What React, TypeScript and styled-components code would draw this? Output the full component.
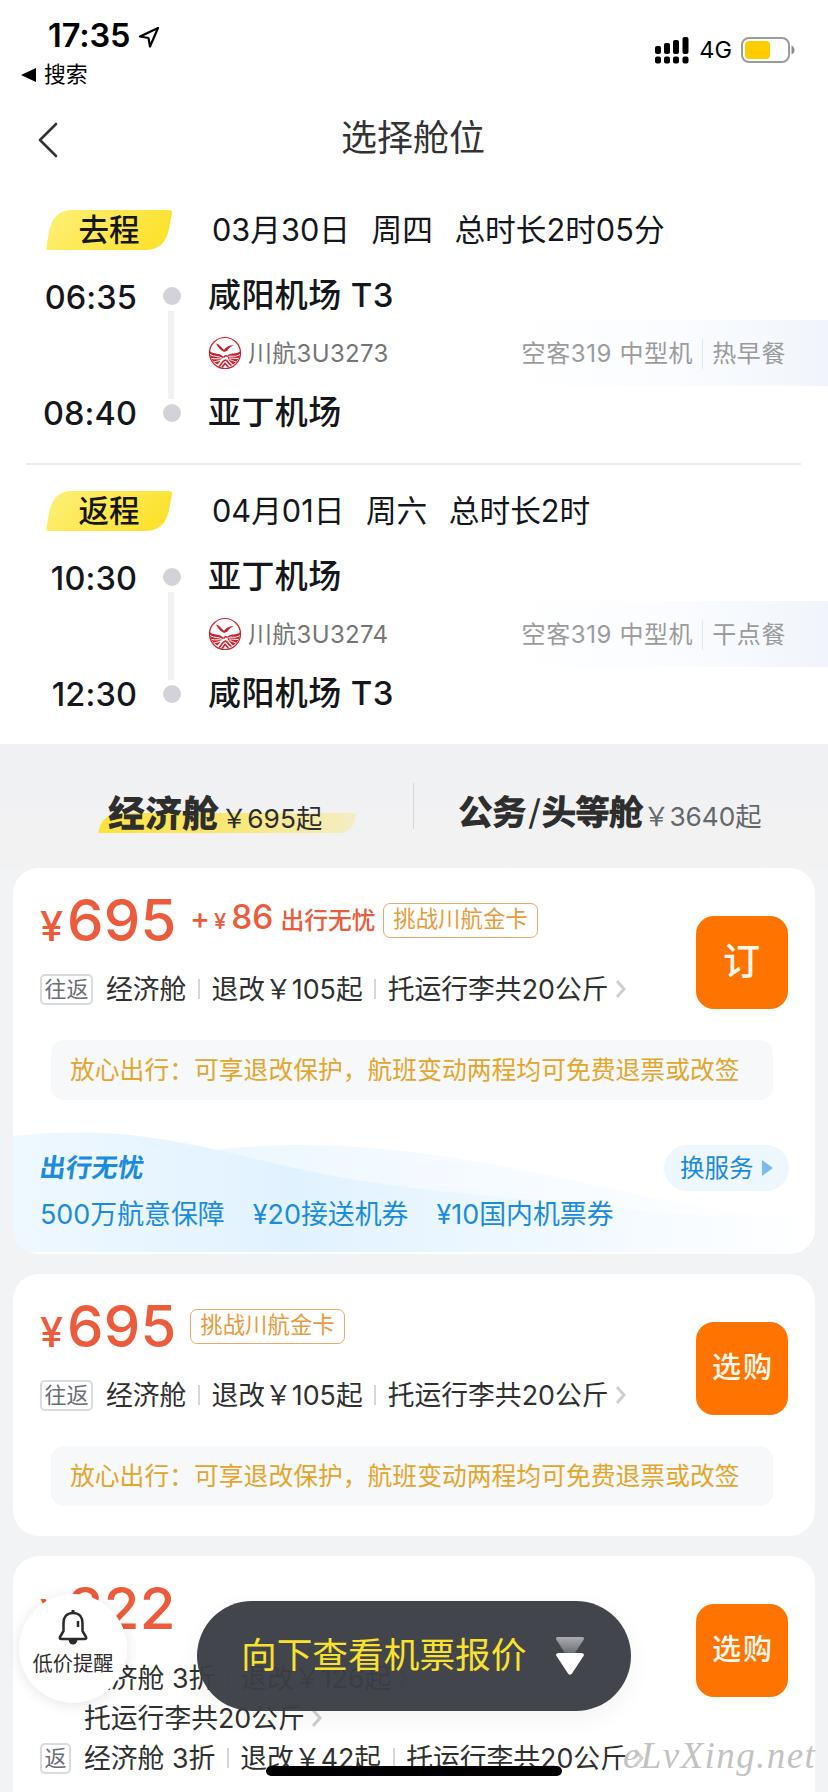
import React from "react";
import styled, { createGlobalStyle } from "styled-components";

const Global = createGlobalStyle`
  *, *::before, *::after { box-sizing: border-box; }
  html, body { margin: 0; padding: 0; }
  body {
    width: 828px; height: 1792px; overflow: hidden; background: #f1f3f5;
    font-family: Inter, "Noto Sans CJK SC", sans-serif; line-height: 1; color: #15171c;
    white-space: nowrap;
  }
  svg { display: block; flex: none; }
`;

const Screen = styled.main`
  position: relative; width: 828px; height: 1792px; overflow: hidden;
  display: flex; flex-direction: column;
`;

const Word = styled.span<{ $ls?: number; $ml?: number; $size?: number }>`
  flex: none;
  letter-spacing: ${(p) => p.$ls ?? 0}px;
  margin-left: ${(p) => p.$ml ?? 0}px;
  ${(p) => (p.$size ? `font-size: ${p.$size}px;` : "")}
`;

/* ---------- top ---------- */
const StatusBar = styled.header`
  display: flex; justify-content: space-between; height: 96px; padding: 18px 33px 0 21px;
  background: #fff; color: #000; flex: none;
`;
const StatusLeft = styled.div`display: flex; flex-direction: column;`;
const Clock = styled.div`
  display: flex; align-items: center; gap: 8px; height: 37px; padding-left: 27px;
  font-size: 32.5px; font-weight: 600; letter-spacing: -0.1px;
`;
const BackToApp = styled.div`
  display: flex; align-items: center; gap: 8px; height: 40px; font-size: 21.8px;
`;
const StatusRight = styled.div`
  display: flex; align-items: center; height: 64px; font-size: 23.5px;
`;
const NavBar = styled.nav`
  display: grid; grid-template-columns: 100px 1fr 100px; align-items: center; height: 86px;
  padding: 0 2px 2px 0; background: #fff; flex: none; color: #333; font-size: 36px; text-align: center;
`;
const BackButton = styled.div`padding: 4px 0 0 37px;`;

/* ---------- flight legs ---------- */
const Leg = styled.section<{ $first?: boolean }>`
  height: ${(p) => (p.$first ? 283 : 279)}px; padding-top: ${(p) => (p.$first ? 28 : 26)}px;
  background: #fff; flex: none; display: flex; flex-direction: column;
`;
const LegHead = styled.div`
  display: flex; align-items: center; height: 40px; margin-left: 46px; padding-top: 1px; font-size: 30.7px;
`;
const Tag = styled.div`
  position: relative; width: 126px; height: 40px; display: grid; place-items: center; isolation: isolate;
  font-size: 30.5px; font-weight: 500; margin: -1px 40px 0 0;
  svg { position: absolute; inset: 0; z-index: -1; }
`;
const LegBody = styled.div`
  display: grid; grid-template-columns: 137px 34px 1fr; column-gap: 18px;
  height: 154px; margin-top: 27px;
`;
const Times = styled.div`
  display: flex; flex-direction: column; justify-content: space-between; align-items: flex-end;
  padding: 5px 0 1px; font-size: 32.5px; font-weight: 500; letter-spacing: 0.1px;
`;
const Track = styled.div`
  display: flex; flex-direction: column; align-items: center; justify-content: space-between; padding: 10px 0 9px;
`;
const Dot = styled.i`width: 18px; height: 18px; border-radius: 50%; background: #d2d2d8;`;
const Line = styled.i`width: 6px; height: 88px; background: #f0f1f3; margin-right: 3px;`;
const Places = styled.div`display: flex; flex-direction: column; margin-left: 1px;`;
const Airport = styled.div`
  display: flex; align-items: flex-start; height: 43px; padding-top: 2px; font-size: 33px; font-weight: 500; letter-spacing: 0.4px;
  &:last-child { padding-top: 10px; }
`;
const Carrier = styled.div`
  display: flex; align-items: center; height: 66px; font-size: 24px; color: #757575;
  > span { padding-top: 2px; }
`;
const Plane = styled.div`
  display: flex; align-items: center; justify-content: flex-end; height: 66px; flex: 1; padding: 2px 42px 0 0;
  margin-left: 60px; color: #9b9b9b;
  background: linear-gradient(90deg, #fff 15%, #fafcff 60%, #f1f5fb);
`;
const Bar = styled.i<{ $h: number; $m: number; $c?: string }>`
  flex: none; width: ${(p) => (p.$c ? 1 : 2)}px; height: ${(p) => p.$h}px; margin: 0 ${(p) => p.$m}px;
  background: ${(p) => p.$c ?? "#d6d6d6"};
`;
const Divider = styled.div`height: 2px; margin: auto 27px 0 26px; background: #ebebeb;`;

/* ---------- cabin tabs ---------- */
const Tabs = styled.div`
  display: flex; height: 124px; flex: none; background: linear-gradient(#f0f1f4, #f2f2f2); padding-top: 39px;
`;
const Tab = styled.div<{ $x: number; $w: number; $on?: boolean }>`
  position: relative; isolation: isolate; display: flex; align-items: baseline; width: ${(p) => p.$w}px; height: 46px;
  padding: 12px 0 0 ${(p) => p.$x}px; color: ${(p) => (p.$on ? "#2d2d2d" : "#66676a")}; font-size: 26.3px;
  > span { position: relative; top: 1px; }
`;
const TabName = styled.b<{ $size: number; $ls: number }>`
  font-size: ${(p) => p.$size}px; font-weight: 900; color: #2e2e2e; letter-spacing: ${(p) => p.$ls}px; transform: skewX(-1deg);
  span { font-weight: 400; padding: 0 2px 0 3px; }
`;
const Swash = styled.i`
  position: absolute; z-index: -1; left: 101px; top: 30px; width: 253px; height: 20px; transform: skewX(-16deg);
  border-radius: 14px 3px 10px 0; background: linear-gradient(90deg, #fce339, #fae66f 45%, #f6ebae 85%, #f4edc6);
`;

/* ---------- fare cards ---------- */
const Cards = styled.div`display: flex; flex-direction: column; gap: 20px; padding: 0 13px;`;
const Card = styled.article<{ $h: number }>`
  position: relative; isolation: isolate; overflow: hidden; flex: none; height: ${(p) => p.$h}px;
  border-radius: 26px; background: #fff; display: flex; flex-direction: column;
`;
const CardTop = styled.div`display: flex; justify-content: space-between; padding: 0 27px;`;
const Info = styled.div`display: flex; flex-direction: column; width: 640px;`;
const PriceRow = styled.div<{ $h?: number }>`
  display: flex; align-items: flex-start; height: ${(p) => p.$h ?? 101}px; padding-top: 22.5px; color: #ec5b3b;
`;
const Price = styled.span`
  display: flex; align-items: baseline; font-size: 58px; font-weight: 500; width: 150px; letter-spacing: 0.3px;
  small { font-size: 41.5px; margin-right: 3.5px; }
`;
const Extra = styled.span`
  display: flex; align-items: baseline; width: 193px; padding-top: 10px; font-weight: 500; font-size: 23.8px;
`;
const Badge = styled.span`
  height: 35px; width: 155px; margin-top: 12px; border: 1.5px solid #e3ab6c; border-radius: 7px;
  color: #e59c40; font-size: 22.4px; line-height: 30px; text-align: center;
`;
const FareLine = styled.div`
  display: flex; align-items: center; height: 40px; font-size: 26.8px; color: #303030;
`;
const Mini = styled.span<{ $w: number }>`
  width: ${(p) => p.$w}px; height: 31px; line-height: 27px; margin-right: 13px; text-align: center; font-size: 22px; color: #6b6e74;
  border: 2px solid #d9dadd; border-radius: 5px; flex: none;
  display: flex; justify-content: center;
`;
const Indent = styled.i<{ $w: number }>`width: ${(p) => p.$w}px; flex: none;`;
const Buy = styled.button`
  width: 92px; height: 93px; margin-top: 48px; padding: 0 0 2px; border: 0; border-radius: 18px; background: #ff7400;
  color: #fffaf0; font: 500 29px/1 Inter, "Noto Sans CJK SC", sans-serif; letter-spacing: 2px; text-indent: 2px; flex: none;
`;
const BigBuy = styled(Buy)`font-size: 37px; letter-spacing: 0; text-indent: -1px;`;
const Notice = styled.div`
  display: flex; align-items: center; height: 60px; margin: 31px 42px 0 38px; padding: 1px 0 0 19px; border-radius: 13px;
  background: #f7f8fa; color: #e4a52c; font-size: 24.8px;
`;
const Service = styled.div`
  position: relative; isolation: isolate; height: 124px; margin-top: auto; padding: 15px 26px 0 27px; color: #1b8bdc;
  > svg { position: absolute; left: 0; bottom: 2px; z-index: -1; }
`;
const ServiceHead = styled.div`display: flex; justify-content: space-between; align-items: center; height: 46px;`;
const ServiceName = styled.b`font-size: 26px; font-weight: 700; transform: skewX(-8deg);`;
const Change = styled.div`
  display: flex; align-items: center; gap: 8px; width: 125px; height: 46px; border-radius: 23px; padding-left: 16px;
  background: #eef7fd; font-size: 24.5px;
`;
const Perks = styled.div`display: flex; align-items: center; height: 46px; font-size: 26.9px;`;

/* ---------- overlays ---------- */
const Alert = styled.div`
  position: absolute; left: 19px; top: 1594px; width: 108px; height: 109px; border-radius: 50%; background: #fff;
  box-shadow: 0 2px 14px rgba(0,0,0,.1); display: flex; flex-direction: column; align-items: center; padding-top: 15px;
  gap: 9px; font-size: 20.3px; color: #2d2d2d;
`;
const More = styled.div`
  position: absolute; left: 197px; top: 1601px; width: 434px; height: 110px; border-radius: 55px; display: flex; align-items: center;
  padding: 0 47px 0 44px; justify-content: space-between; background: rgba(58,62,69,.96); color: #f9e22f; font-size: 35.7px;
  box-shadow: 0 8px 24px rgba(0,0,0,.05);
`;
const HomeBar = styled.i`
  position: absolute; left: 266px; top: 1766px; width: 296px; height: 10px; border-radius: 5px; background: #000;
`;
const Watermark = styled.div`
  position: absolute; left: 623px; top: 1737px; font: italic 37px/1 "Liberation Serif", serif; color: #c2c2c2; letter-spacing: 1.4px;
`;

const Chevron = () => (
  <svg width="19" height="20" viewBox="0 0 19 20">
    <path d="M8 2l7 8-7 8" fill="none" stroke="#cfcfcf" strokeWidth="3" />
  </svg>
);

const AirlineLogo = () => (
  <svg width="34" height="34" viewBox="0 0 34 34">
    <circle cx="17" cy="17" r="15.500" fill="#fff" stroke="#c8232f" strokeWidth="1.200" />
    <path d="M8 7.500c3 .3 5 3.600 8 6.300 2-2.500 4.500-4.600 10-4.600-3.500 1-5.500 3.200-6.500 5.300l-3.300 1.500c-3-1-6.200-4.500-8.200-8.500z" fill="#c8232f" />
    <path d="M1.500 15c5 4 10 1 14 6-2 2-3 4-6 7.500C4 25.500 1.500 21 1.500 15zM32.500 15c-5 4-9 1-13 4.500 0 4 3 6 5.500 9 5-3 7.500-8 7.500-13.500z" fill="#c8232f" />
    <path d="M2 18.500c5 3 9 1 12.500 4M3.500 22.500c4 1 7-.5 10.500.8M6 26c3-.8 5-1.500 7.500-1.500M32 18.500c-5 3-8 1-11.500 2M30.500 22.500c-4 0-6-.5-9.500-.5M28 26c-3-1-4.500-2-6.500-2.500" stroke="#fff" strokeWidth="1" fill="none" />
    <path d="M11 30.500c3-1.500 2-5 6.500-6.500 3 1 3 4.500 6 5.500M14 31.500l3-4 3.500 3.500M15.500 21.500q2-3 4-1" stroke="#c8232f" strokeWidth="1.600" fill="none" />
  </svg>
);

type LegData = {
  tag: string; date: string; day: string; total: string; dep: string; arr: string;
  from: string; to: string; no: string; meal: string; first?: boolean;
};

const FlightLeg = (p: LegData) => (
  <Leg $first={p.first}>
    <LegHead>
      <Tag>
        <svg width="126" height="40">
          <defs>
            <linearGradient id={"tag" + p.dep} x1="0" y1="0" x2="1" y2=".3">
              <stop offset="0" stopColor="#fdf07a" />
              <stop offset="1" stopColor="#fde22f" />
            </linearGradient>
          </defs>
          <path d="M3 22Q7 0 26 0H123Q126.500 0 126 3L123 19Q119 40 99 40H2Q0 40 .4 37Z" fill={"url(#tag" + p.dep + ")"} />
        </svg>
        {p.tag}
      </Tag>
      <Word>{p.date}</Word>
      <Word $ml={21.5}>{p.day}</Word>
      <Word $ml={21.5}>{p.total}</Word>
    </LegHead>
    <LegBody>
      <Times><span>{p.dep}</span><span>{p.arr}</span></Times>
      <Track><Dot /><Line /><Dot /></Track>
      <Places>
        <Airport>{p.from}</Airport>
        <Carrier>
          <AirlineLogo />
          <Word $ml={6} $ls={0.3}>{p.no}</Word>
          <Plane>
            <Word $ls={0.6}>空客319 中型机</Word>
            <Bar $h={30} $m={9} $c="#e3e6ec" />
            <Word $ls={0.6}>{p.meal}</Word>
          </Plane>
        </Carrier>
        <Airport>{p.to}</Airport>
      </Places>
    </LegBody>
    {p.first && <Divider />}
  </Leg>
);

const FareDetails = ({ cabin, refund, bag }: { cabin: string; refund: string; bag?: boolean }) => (
  <>
    <Word>{cabin}</Word>
    <Bar $h={20} $m={11.5} />
    <Word>退改{refund}</Word>
    {bag && <Bar $h={20} $m={11.5} />}
    {bag && <Word>托运行李共20公斤</Word>}
    <Chevron />
  </>
);

const RefundNotice = () => <Notice><Word>放心出行：可享退改保护，航班变动两程均可免费退票或改签</Word></Notice>;

export default function App() {
  return (
    <>
      <Global />
      <Screen>
        <StatusBar>
          <StatusLeft>
            <Clock>
              17:35
              <svg width="22" height="22" viewBox="0 0 22 22">
                <path d="M20 2L2 10.500l8.500 1.500 1.500 8.500z" fill="none" stroke="#000" strokeWidth="2.200" strokeLinejoin="round" />
              </svg>
            </Clock>
            <BackToApp>
              <svg width="15" height="14"><path d="M0 7L15 0V14Z" /></svg>
              搜索
            </BackToApp>
          </StatusLeft>
          <StatusRight>
            <svg width="34" height="27">
              <rect x="0" y="9" width="6" height="8" rx="2" /><rect x="9" y="6" width="6" height="11" rx="2" />
              <rect x="18" y="3" width="6" height="14" rx="2" /><rect x="27.500" y="0" width="6" height="17" rx="2" />
              <rect x="0" y="19.500" width="6" height="7" rx="2" /><rect x="9" y="19.500" width="6" height="7" rx="2" />
              <rect x="18" y="19.500" width="6" height="7" rx="2" /><rect x="27.500" y="19.500" width="6" height="7" rx="2" />
            </svg>
            <Word $ml={10}>4G</Word>
            <Indent $w={9} />
            <svg width="54" height="26">
              <rect x="1" y="1" width="47" height="24" rx="7" fill="none" stroke="#9b9b9b" strokeWidth="2" />
              <rect x="4" y="4" width="25" height="18" rx="4" fill="#ffcc02" />
              <path d="M50.500 8.500q3 1.500 3 4.500t-3 4.500z" fill="#8c8c8c" />
            </svg>
          </StatusRight>
        </StatusBar>
        <NavBar>
          <BackButton>
            <svg width="22" height="38" viewBox="0 0 22 38"><path d="M19 3L3 19l16 16" fill="none" stroke="#333" strokeWidth="2.600" strokeLinecap="round" strokeLinejoin="round" /></svg>
          </BackButton>
          <span>选择舱位</span>
        </NavBar>

        <FlightLeg tag="去程" date="03月30日" day="周四" total="总时长2时05分" dep="06:35" arr="08:40"
          from="咸阳机场 T3" to="亚丁机场" no="川航3U3273" meal="热早餐" first />
        <FlightLeg tag="返程" date="04月01日" day="周六" total="总时长2时" dep="10:30" arr="12:30"
          from="亚丁机场" to="咸阳机场 T3" no="川航3U3274" meal="干点餐" />

        <Tabs>
          <Tab $x={108} $w={413} $on><Swash /><TabName $size={37} $ls={0}>经济舱</TabName><Word $ml={2}>￥695起</Word></Tab>
          <Bar $h={46} $m={0} $c="#d5d6d9" />
          <Tab $x={44} $w={414}><TabName $size={35} $ls={-1.4}>公务<span>/</span>头等舱</TabName><Word $ml={1} $ls={-0.1}>￥3640起</Word></Tab>
        </Tabs>

        <Cards>
          <Card $h={386}>
            <CardTop>
              <Info>
                <PriceRow>
                  <Price><small>¥</small>695</Price>
                  <Extra>
                    <Word $size={30}>+</Word>
                    <Word $ml={4} $size={22}>¥</Word>
                    <Word $ml={5} $size={33.5}>86</Word>
                    <Word $ml={7}>出行无忧</Word>
                  </Extra>
                  <Badge>挑战川航金卡</Badge>
                </PriceRow>
                <FareLine><Mini $w={53}>往返</Mini><FareDetails cabin="经济舱" refund="￥105起" bag /></FareLine>
              </Info>
              <BigBuy>订</BigBuy>
            </CardTop>
            <RefundNotice />
            <Service>
              <svg width="802" height="121" viewBox="0 0 802 121">
                <defs>
                  <linearGradient id="w1"><stop offset="0" stopColor="#eff8ff" /><stop offset=".35" stopColor="#e1f2ff" /><stop offset="1" stopColor="#fff" /></linearGradient>
                  <linearGradient id="w2"><stop offset="0" stopColor="#edf7ff" /><stop offset=".5" stopColor="#f6fbff" /><stop offset="1" stopColor="#fff" /></linearGradient>
                </defs>
                <path d="M180 22C330 -1 470 30 610 60S740 80 802 85V121H180Z" fill="url(#w2)" />
                <path d="M0 5C100 -5 160 8 260 32S430 60 580 75S740 85 802 90V121H0Z" fill="url(#w1)" />
              </svg>
              <ServiceHead>
                <ServiceName>出行无忧</ServiceName>
                <Change>换服务<svg width="11" height="16"><path d="M0 0L11 8L0 16Z" fill="#74bdf3" /></svg></Change>
              </ServiceHead>
              <Perks>
                <Word>500万航意保障</Word><Word $ml={28}>¥20接送机券</Word><Word $ml={28}>¥10国内机票券</Word>
              </Perks>
            </Service>
          </Card>

          <Card $h={262}>
            <CardTop>
              <Info>
                <PriceRow>
                  <Price><small>¥</small>695</Price>
                  <Badge>挑战川航金卡</Badge>
                </PriceRow>
                <FareLine><Mini $w={53}>往返</Mini><FareDetails cabin="经济舱" refund="￥105起" bag /></FareLine>
              </Info>
              <Buy>选购</Buy>
            </CardTop>
            <RefundNotice />
          </Card>

          <Card $h={270}>
            <CardTop>
              <Info>
                <PriceRow $h={102}><Price><small>¥</small>822</Price></PriceRow>
                <FareLine><Mini $w={31}>去</Mini><FareDetails cabin="经济舱 3折" refund="￥126起" /></FareLine>
                <FareLine><Indent $w={44} /><Word>托运行李共20公斤</Word><Chevron /></FareLine>
                <FareLine><Mini $w={31}>返</Mini><FareDetails cabin="经济舱 3折" refund="￥42起" bag /></FareLine>
              </Info>
              <Buy>选购</Buy>
            </CardTop>
          </Card>
        </Cards>

        <Alert>
          <svg width="30" height="36" viewBox="0 0 30 36">
            <path d="M15 4C8 4 5.500 9 5.500 14v8L2 28q-1 2 1.500 2h23q2.500 0 1.500-2l-3.500-6v-8C24.500 9 22 4 15 4Z" fill="none" stroke="#2b2b2b" strokeWidth="2.500" strokeLinejoin="round" />
            <path d="M13.500 1h3v3h-3zM10.500 31h9q-1 4.500-4.500 4.500T10.500 31z" fill="#2b2b2b" />
            <path d="M20 12v6" stroke="#2b2b2b" strokeWidth="2.500" />
          </svg>
          低价提醒
        </Alert>
        <More>
          向下查看机票报价
          <svg width="28" height="38" viewBox="0 0 28 38">
            <defs><linearGradient id="fade" x1="0" y1="0" x2="0" y2="1"><stop offset="0" stopColor="#a9abaf" /><stop offset="1" stopColor="#63666c" /></linearGradient></defs>
            <path d="M2 0H26Q29 0 27.500 3L17 19H11L.5 3Q-1 0 2 0Z" fill="url(#fade)" />
            <path d="M3 16H25Q29 16 27.500 19L16 36.500Q14 39 12 36.500L.5 19Q-1 16 3 16Z" fill="#fff" />
          </svg>
        </More>
        <HomeBar />
        <Watermark>eLvXing.net</Watermark>
      </Screen>
    </>
  );
}
